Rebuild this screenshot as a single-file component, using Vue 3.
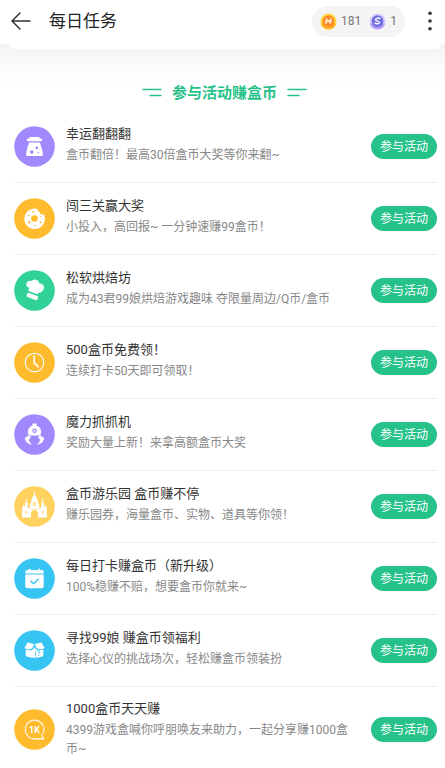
<script setup>
const tasks = [
  { icon: 'potion', color: '#a088fd', title: '幸运翻翻翻', desc: '盒币翻倍！最高30倍盒币大奖等你来翻~' },
  { icon: 'donut', color: '#fdbb2d', title: '闯三关赢大奖', desc: '小投入，高回报~ 一分钟速赚99盒币！' },
  { icon: 'chef', color: '#31d297', title: '松软烘焙坊', desc: '成为43君99娘烘焙游戏趣味 夺限量周边/Q币/盒币' },
  { icon: 'clock', color: '#fdbb2d', title: '500盒币免费领！', desc: '连续打卡50天即可领取！' },
  { icon: 'claw', color: '#a088fd', title: '魔力抓抓机', desc: '奖励大量上新！来拿高额盒币大奖' },
  { icon: 'castle', color: '#ffd15f', title: '盒币游乐园 盒币赚不停', desc: '赚乐园券，海量盒币、实物、道具等你领！' },
  { icon: 'calendar', color: '#36c5f2', title: '每日打卡赚盒币（新升级）', desc: '100%稳赚不赔，想要盒币你就来~' },
  { icon: 'box', color: '#36c5f2', title: '寻找99娘 赚盒币领福利', desc: '选择心仪的挑战场次，轻松赚盒币领装扮' },
  { icon: 'share', color: '#fdbb2d', title: '1000盒币天天赚', desc: '4399游戏盒喊你呼朋唤友来助力，一起分享赚1000盒币~' }
]
</script>

<template>
  <div class="page">
    <header class="bar">
      <button class="icon-btn" aria-label="返回">
        <svg width="20" height="18" viewBox="0 0 20 18" fill="none" stroke="#333" stroke-width="1.5" stroke-linecap="round" stroke-linejoin="round"><path d="M19 9H1M9 1L1 9l8 8" /></svg>
      </button>
      <h1>每日任务</h1>
      <div class="wallet">
        <svg width="17" height="17" viewBox="0 0 18 18">
          <circle cx="9" cy="9" r="8.5" fill="#ffd93f" /><path d="M1 11a8.3 8.3 0 0 0 16 0" fill="#ffb51f" />
          <circle cx="9" cy="8.6" r="6.3" fill="#ff8a2b" />
          <path d="M7.2 5.6l-1.1 6M11.8 5.6l-1.1 6M6.8 8.6h4.4" stroke="#fff3d0" stroke-width="1.6" fill="none" />
        </svg>
        <span>181</span>
        <svg class="second" width="17" height="17" viewBox="0 0 18 18">
          <circle cx="9" cy="9" r="8.5" fill="#e0cbff" /><path d="M1 11a8.3 8.3 0 0 0 16 0" fill="#b29af5" />
          <circle cx="9" cy="8.6" r="6.3" fill="#6f70df" />
          <path d="M12 6.4C10.8 4.8 7 5.1 7 7.1c0 1.9 4.2 1.1 4 3-.2 1.9-3.9 1.9-4.9.2" stroke="#fff" stroke-width="1.5" fill="none" />
        </svg>
        <span>1</span>
      </div>
      <button class="icon-btn more" aria-label="更多">
        <svg width="6" height="20" viewBox="0 0 6 20" fill="#333"><circle cx="3" cy="2.3" r="1.8" /><circle cx="3" cy="10" r="1.8" /><circle cx="3" cy="17.7" r="1.8" /></svg>
      </button>
    </header>
    <main>
      <div class="card-edge"></div>
      <h2>
        <svg width="20" height="10" viewBox="0 0 20 10" stroke="#27c28a" stroke-width="1.5" stroke-linecap="round"><path d="M1 1.5h18M8 7.5h11" /></svg>
        <span>参与活动赚盒币</span>
        <svg width="20" height="10" viewBox="0 0 20 10" stroke="#27c28a" stroke-width="1.5" stroke-linecap="round"><path d="M1 1.5h18M1 7.5h11" /></svg>
      </h2>
      <ul>
        <li v-for="t in tasks" :key="t.title">
          <svg class="badge" viewBox="0 0 41 41" aria-hidden="true">
            <circle cx="20.5" cy="20.5" r="20.3" :fill="t.color" />
            <g v-if="t.icon === 'potion'" fill="#fff">
              <path d="M15.5 11h10v1.6h1.4q1.2 0 1.2 1.3t-1.2 1.3H14.1q-1.2 0-1.2-1.3t1.2-1.3h1.4z" />
              <path d="M15.3 16.4h10.4q2.2 4.8 3.3 11.5.3 2.2-1.8 2.2H13.8q-2.1 0-1.8-2.2 1.1-6.7 3.3-11.5z" />
              <circle cx="22.8" cy="21.8" r="1.4" :fill="t.color" /><circle cx="17.8" cy="26" r="1.8" :fill="t.color" /><circle cx="24.2" cy="26.8" r=".8" :fill="t.color" />
            </g>
            <g v-else-if="t.icon === 'donut'">
              <path d="M23.5 10.9c-.1 1.8.7 2.7 2.2 2.8-.2 2 1.8 3.5 4.2 2.6A10.3 10.3 0 1 1 23.5 10.9z" fill="#fff" />
              <g :fill="t.color"><circle cx="20.5" cy="20.5" r="3.3" /><circle cx="19.3" cy="13.7" r="1" /><circle cx="14.6" cy="17.6" r=".8" /><circle cx="15.3" cy="24.2" r="1.2" /><circle cx="21.3" cy="27.4" r=".7" /><circle cx="26.5" cy="24.3" r="1" /><circle cx="26.8" cy="18.6" r=".6" /></g>
            </g>
            <g v-else-if="t.icon === 'chef'" fill="#fff">
              <path d="M14.2 20.8l1.2-3.1a3.4 3.4 0 0 1-1.6-6.3 3.6 3.6 0 0 1 3.6-.3 4.6 4.6 0 0 1 8 2.4 4.1 4.1 0 0 1 4.6 4 3.5 3.5 0 0 1-1.3 3.1 3.6 3.6 0 0 1-4.4 1.9l-.8 2.1z" />
              <path d="M13.8 22.5l10.6 4-1.3 3.2q-.4.9-1.3.5l-8.6-3.4q-.9-.4-.5-1.3z" />
            </g>
            <g v-else-if="t.icon === 'clock'" fill="none" stroke="#fff" stroke-width="1.1" stroke-linecap="round">
              <circle cx="20.5" cy="20.5" r="9.3" /><path d="M20.2 14v6.8l4 4" stroke-width="1.6" />
            </g>
            <g v-else-if="t.icon === 'claw'">
              <path d="M18.5 9.6h4v1.8a6.5 6.5 0 0 1 4 9q-.5 1.1-1.6 1.1h-8.8q-1.1 0-1.6-1.1a6.5 6.5 0 0 1 4-9z" fill="#fff" />
              <circle cx="20.5" cy="16.8" r="2.2" :fill="t.color" /><circle cx="20.5" cy="16.8" r="1" fill="#fff" />
              <path d="M15 21.5l1.6 1.4-2.1 3 .8 1.9 2 2.6-4.3-1.8-2-4.4zM26 21.5l-1.6 1.4 2.1 3-.8 1.9-2 2.6 4.3-1.8 2-4.4z" fill="#fff" stroke="#fff" stroke-width=".6" stroke-linejoin="round" />
            </g>
            <g v-else-if="t.icon === 'castle'">
              <path d="M8 31.5V21.5h1V19h1v1.5h1V18l1.4-3.5 1.4 3.5v4h2V18l1.2-1 .7-4 2.8-5.5 2.8 5.5.7 4 1.2 1v4h2v-4l1.4-3.5 1.4 3.5v2.5h1V19h1v2.5h1v10h-9v-4a3.5 3.5 0 0 0-7 0v4z" fill="#fff" />
              <path d="M20.5 5.5v3M12.4 12.5v3M28.6 12.5v3" stroke="#fff" stroke-width=".8" /><g :fill="t.color"><circle cx="20.5" cy="18" r="1.9" /><path d="M11.5 25h1.3v2.5h-1.3zM28.2 25h1.3v2.5h-1.3zM16 22.7h9v.6h-9z" /></g>
              <circle cx="20.5" cy="18" r=".9" fill="#fff" />
            </g>
            <g v-else-if="t.icon === 'calendar'" fill="#fff">
              <path d="M11.3 15.4v-1.5q0-2 2-2h1.5v-1.2h1.8v1.2h7.8v-1.2h1.8v1.2h1.5q2 0 2 2v1.5zM11.3 16.6h18.4v11.6q0 2-2 2H13.3q-2 0-2-2z" />
              <path d="M17 23.3l2.6 2.5 4.7-4.6" fill="none" :stroke="t.color" stroke-width="1.4" stroke-linecap="round" stroke-linejoin="round" />
            </g>
            <g v-else-if="t.icon === 'box'">
              <path d="M13.2 12.5q4 .6 6.8 1.6-.3 3.6-3 5-3.8.3-6.7-1.2 2.2-2.2 2.9-5.4zM27.8 12.5q-4 .6-6.8 1.6.3 3.6 3 5 3.8.3 6.7-1.2-2.2-2.2-2.9-5.4z" fill="#fff" />
              <path d="M11.7 19.6q3 .9 6.2.4 1.8-1 2.6-2.8.8 1.8 2.6 2.8 3.2.5 6.2-.4v5.6q0 1-1 1.3-3.7 1.2-7.8 1.2t-7.8-1.2q-1-.3-1-1.3z" fill="#fff" />
              <path d="M21.6 20.4v6.8" fill="none" :stroke="t.color" stroke-width=".7" />
              <path d="M23.2 21.8c.5-1.3 3-1.2 2.8.2-.1.9-1.5.9-1.5 2M24.5 25v1" fill="none" :stroke="t.color" stroke-width=".9" />
            </g>
            <g v-else fill="none" stroke="#fff">
              <path d="M27.5 25.7l2.2 4.2h-9.2a9.4 9.4 0 1 1 8.6-13.2M29.8 18.3a9.4 9.4 0 0 1-.7 5.9" stroke-width="1.1" stroke-linecap="round" stroke-linejoin="round" />
              <text x="20.5" y="24" text-anchor="middle" class="mark">1K</text>
            </g>
          </svg>
          <div class="copy">
            <h3>{{ t.title }}</h3>
            <p>{{ t.desc }}</p>
          </div>
          <button class="join">参与活动</button>
        </li>
      </ul>
    </main>
  </div>
</template>

<style>
body {
  margin: 0;
  background: #fff;
}
</style>

<style scoped>
.page {
  font-family: Roboto, "Noto Sans CJK SC", sans-serif;
  color: #333;
}
button {
  font: inherit;
  border: 0;
  padding: 0;
  cursor: pointer;
}
h1, h2, h3, p, ul {
  margin: 0;
  padding: 0;
  font-weight: 400;
}
.bar {
  display: flex;
  align-items: center;
  height: 44px;
  box-sizing: border-box;
  padding: 0 12px 2px 11px;
}
.icon-btn {
  display: flex;
  background: none;
}
h1 {
  flex: 1;
  margin-left: 18px;
  font-size: 17px;
  line-height: 24px;
  color: #222;
}
.wallet {
  display: flex;
  align-items: center;
  height: 31px;
  padding: 0 8px;
  border-radius: 16px;
  background: #f4f4f4;
  font-size: 12px;
  color: #777;
}
.wallet span {
  margin-left: 4px;
}
.wallet .second {
  margin-left: 8px;
}
.more {
  margin-left: 22px;
}
main {
  background: linear-gradient(#f3f3f3, #fff 40px);
}
.card-edge {
  height: 5px;
  margin: 0 4px 0 10px;
  border-radius: 0 0 6px 6px;
  background: #fff;
}
h2 {
  display: flex;
  justify-content: center;
  align-items: center;
  gap: 10px;
  padding: 33px 0 7px 4px;
  font-size: 15px;
  font-weight: 700;
  line-height: 22px;
  color: #27c28a;
}
h2 svg {
  fill: none;
}
ul {
  list-style: none;
  padding: 0 8px 0 14px;
}
li {
  display: flex;
  align-items: center;
  min-height: 72px;
  box-sizing: border-box;
  border-bottom: 1px solid #eee;
}
li:last-child {
  min-height: 84px;
  border-bottom: 0;
}
.badge {
  flex: none;
  width: 41px;
  height: 41px;
}
.mark {
  font: 700 9px Roboto, sans-serif;
  fill: #fff;
  stroke: none;
}
.copy {
  flex: 1;
  margin: 0 17px 0 11px;
  padding-bottom: 4px;
}
li:last-child .copy {
  padding-bottom: 0;
}
h3 {
  font-size: 13px;
  line-height: 20px;
  padding-bottom: 2px;
}
p {
  font-size: 12px;
  line-height: 19px;
  color: #888;
}
.join {
  flex: none;
  width: 66px;
  height: 25px;
  padding-top: 2px;
  border-radius: 13px;
  background: #27c28a;
  color: #fff;
  font-size: 12px;
  line-height: 23px;
}
</style>
